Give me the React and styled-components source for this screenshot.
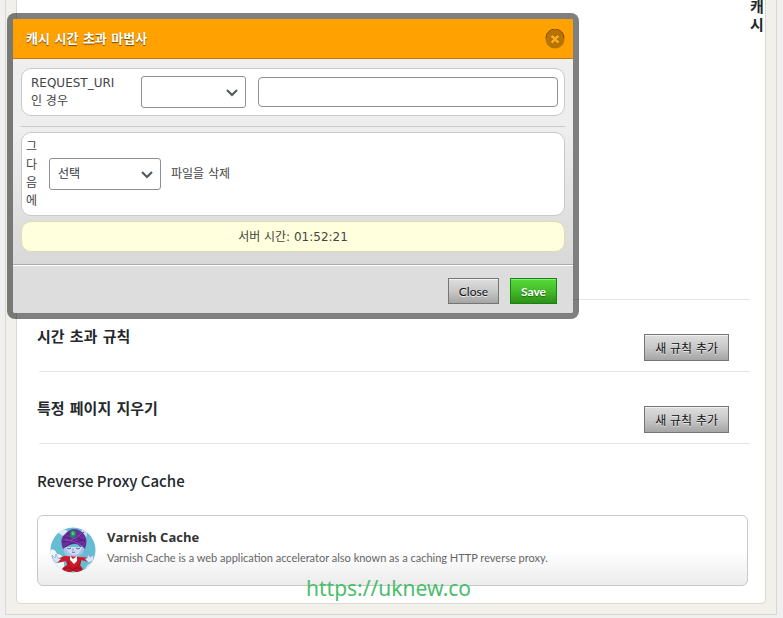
import React from 'react';
import styled, { createGlobalStyle } from 'styled-components';

const GlobalStyle = createGlobalStyle`
  * {
    box-sizing: border-box;
  }
  body {
    margin: 0;
    background: #f0f0f0;
    color: #444;
    font-family: 'DejaVu Sans', 'Noto Sans CJK KR', sans-serif;
    font-size: 12px;
    line-height: 18px;
  }
`;

const Page = styled.div`
  position: relative;
  padding: 0 6px 3px 5px;
`;

const Outer = styled.div`
  padding: 0 10px 10px;
  background: #f1f0eb;
  border: 1px solid #dad9cd;
  border-top: 0;
`;

const Panel = styled.main`
  background: white;
  border: 1px solid #dad9cd;
  border-top: 0;
  border-radius: 0 0 5px 5px;
`;

const TopArea = styled.div`
  display: flex;
  justify-content: flex-end;
  height: 299px;
`;

const SideTitle = styled.h2`
  width: 15px;
  margin: 0;
  margin-top: -2px;
  color: #23282d;
  font-size: 15px;
  line-height: 18px;
  word-break: break-all;
`;

const Content = styled.div`
  padding: 0 15px 17px 20px;
`;

const Divider = styled.hr`
  height: 1px;
  margin: 0 0 0 2px;
  border: 0;
  background: #e5e5e5;
`;

const RuleRow = styled.section`
  display: flex;
  justify-content: space-between;
  height: 71px;
  padding: 23px 21px 0 0;
`;

const RuleTitle = styled.h2`
  margin: 0;
  color: #23282d;
  font-size: 15px;
  line-height: 28px;
`;

const Button = styled.button`
  height: 27px;
  padding: 0 10px;
  margin-top: 11px;
  border: 1px solid #757575;
  background: linear-gradient(#dedede, #c8c8c8 50%, #a5a5a5);
  box-shadow: inset 0 1px 0 #f2f2f2;
  color: #111;
  font-family: inherit;
  font-size: 12px;
  text-shadow: 0 1px 0 #eee;
`;

const DialogButton = styled(Button)`
  height: 26px;
  margin-top: 0;
  font-family: Lato, sans-serif;
`;

const SaveButton = styled(DialogButton)`
  border-color: #128512;
  background: linear-gradient(#57db38, #45bb2a 50%, #2f8f18);
  box-shadow: inset 0 1px 0 #8bea75;
  color: white;
  font-weight: bold;
  text-shadow: 0 1px 1px #1d6a10;
`;

const ProxyTitle = styled.h2`
  margin: 23px 0 20px;
  color: #23282d;
  font-family: 'Noto Sans CJK KR', sans-serif;
  font-size: 15px;
  font-weight: 500;
  line-height: 28px;
`;

const ProxyCard = styled.article`
  display: flex;
  gap: 11px;
  height: 71px;
  margin-right: 2px;
  padding: 11px 12px;
  border: 1px solid #c8c8c8;
  border-radius: 6px;
  background: linear-gradient(white 50%, #ececec);
`;

const ProxyName = styled.h3`
  margin: 0;
  color: #333;
  font-family: 'Open Sans', sans-serif;
  font-size: 13px;
  line-height: 20px;
`;

const ProxyText = styled.p`
  margin: 0;
  color: #666;
  font-family: Lato, sans-serif;
  font-size: 11px;
  line-height: 22px;
`;

const Watermark = styled.div`
  position: absolute;
  left: 306px;
  bottom: 17px;
  color: #4bbd6c;
  font-family: 'Noto Sans', sans-serif;
  font-size: 21px;
  line-height: 26px;
`;

const Dialog = styled.div`
  position: absolute;
  top: 13px;
  left: 7px;
  width: 572px;
  max-width: calc(100% - 14px);
  border: 6px solid rgba(0, 0, 0, 0.5);
  border-radius: 8px;
  background: #ddd;
  background-clip: padding-box;
`;

const DialogHeader = styled.header`
  display: flex;
  align-items: center;
  justify-content: space-between;
  height: 40px;
  padding: 0 8px 0 13px;
  border-bottom: 1px solid #c37b00;
  border-radius: 2px 2px 0 0;
  background: #ffa100;
`;

const DialogTitle = styled.h1`
  margin: 0;
  color: white;
  font-size: 13px;
  text-shadow: 0 1px 1px #6b4400;
`;

const CloseIcon = styled.button`
  display: flex;
  padding: 0;
  border: 0;
  background: none;
`;

const DialogBody = styled.form`
  padding: 9px 8px 12px;
  background: linear-gradient(#eee 35%, #d8d8d8);
`;

const Box = styled.div`
  display: flex;
  align-items: center;
  border: 1px solid #c9c9c9;
  border-radius: 10px;
  background: white;
`;

const Condition = styled(Box)`
  height: 48px;
  padding: 0 6px 0 9px;
`;

const ConditionLabel = styled.label`
  width: 110px;
`;

const Line = styled.hr`
  height: 1px;
  margin: 10px 0 5px;
  border: 0;
  background: #c9c9c9;
`;

const Action = styled(Box)`
  height: 84px;
  padding: 0 4px;
`;

const ActionLabel = styled.label`
  width: 12px;
  margin-right: 11px;
  word-break: break-all;
`;

const SelectWrap = styled.div`
  display: grid;
  align-items: center;
  width: ${props => props.$width};

  > * {
    grid-area: 1 / 1;
  }
  svg {
    justify-self: end;
    margin-right: 7px;
    pointer-events: none;
  }
`;

const Select = styled.select`
  appearance: none;
  width: 100%;
  height: 32px;
  padding: 0 24px 0 8px;
  border: 1px solid #8c8f94;
  border-radius: 3px;
  background: white;
  color: #32373c;
  font-family: inherit;
  font-size: 12px;
`;

const Input = styled.input`
  flex: 1;
  min-width: 0;
  height: 30px;
  margin-left: 12px;
  padding: 0 8px;
  border: 1px solid #8c8f94;
  border-radius: 4px;
  background: white;
`;

const ActionText = styled.span`
  margin-left: 10px;
`;

const ServerTime = styled.p`
  height: 31px;
  margin: 5px 0 0;
  border: 1px solid #dcdcb0;
  border-radius: 10px;
  background: #ffffdd;
  line-height: 31px;
  text-align: center;
`;

const DialogFooter = styled.footer`
  display: flex;
  justify-content: flex-end;
  gap: 11px;
  height: 49px;
  padding: 13px 16px 0;
  border-top: 1px solid #aaa;
  border-radius: 0 0 2px 2px;
  background: #ddd;
  box-shadow: inset 0 1px 0 white;
`;

const Arrow = () => (
  <svg width='14' height='14' viewBox='0 0 14 14' fill='none'>
    <path d='M2 5l5 5 5-5' stroke='#50575e' strokeWidth='2' />
  </svg>
);

const Avatar = () => (
  <svg width='46' height='46' viewBox='0 0 46 46'>
    <defs>
      <clipPath id='avatar-clip'>
        <circle cx='23' cy='23' r='22.5' />
      </clipPath>
    </defs>
    <g clipPath='url(#avatar-clip)'>
      <rect width='46' height='46' fill='#66bdd2' />
      <path d='M0 23q5-2 7 4 5 0 6 5l3 14H0z' fill='#f1f7fa' />
      <path d='M46 35q-9-1-12 11h12z' fill='#dceff4' />
      <path d='M7 3q8-3 12 3l-2 4Q10 9 7 3z' fill='#dfe9f8' />
      <path d='M31 7q0-6 4-7 4 5 0 13z' fill='#cbdaf0' />
      <path d='M14 20q-2 9 9 10 12-1 11-10z' fill='#a9bfe8' />
      <path d='M16 20q1 7 8 8 7-1 8-8z' fill='#cbdcf7' />
      <path
        d='M13 22Q9 12 15 7q8-9 17-2 7 6 3 17l-3-3q-9-5-19 3z'
        fill='#6d2c9c'
      />
      <path
        d='M13 10q9 0 18 10M12 15q12 0 22-10M17 6q7 4 18 8M15 20q8-6 20-7'
        stroke='#43216f'
        strokeWidth='.8'
        fill='none'
      />
      <path
        d='M15 13q9 0 15 5M21 13q7-2 11-7'
        stroke='#914cb7'
        fill='none'
      />
      <ellipse cx='23' cy='7' rx='3.2' ry='4' fill='#257e6b' />
      <ellipse cx='23' cy='6.5' rx='1.5' ry='2' fill='#51ca78' />
      <path
        d='M17 21q2 2 4 0M26 21q2 2 4 0M22 25q2 1 3 0'
        stroke='#566295'
        fill='none'
      />
      <circle cx='23' cy='22.5' r='1' fill='#e77faa' />
      <path d='M14 29L5 33l2 3 9-2 2 7h12l1-8 8 2 2-4-11-1z' fill='#cf1828' />
      <path d='M20 29l3 3 4-3v5l-3 3-4-4z' fill='white' />
      <path d='M12 42q5-7 11-2 6-5 10 2-3 5-10 2-7 4-11-2z' fill='#c41526' />
      <path
        d='M14 42q5-3 9 1 4-4 8-1M18 34l1 4M31 33l-2 6'
        stroke='#7e1020'
        strokeWidth='.7'
        fill='none'
      />
      <path
        d='M2 28l3 3 1-4 2 4 3 1-4 4-4-3zM43 28l-3 2-2-3-1 4-2 1 4 4 5-3z'
        fill='#d5e4f8'
        stroke='#789bc1'
        strokeWidth='.6'
      />
    </g>
  </svg>
);

class App extends React.Component {
  state = {
    condition: '',
    uri: '',
    action: 'select'
  };

  handleChange = e => {
    this.setState({
      [e.target.name]: e.target.value
    });
  };

  handleSubmit = e => {
    e.preventDefault();
  };

  render() {
    return (
      <Page>
        <GlobalStyle />
        <Outer>
          <Panel>
            <TopArea>
              <SideTitle>캐시</SideTitle>
            </TopArea>
            <Content>
              <Divider />
              <RuleRow>
                <RuleTitle>시간 초과 규칙</RuleTitle>
                <Button type='button'>새 규칙 추가</Button>
              </RuleRow>
              <Divider />
              <RuleRow>
                <RuleTitle>특정 페이지 지우기</RuleTitle>
                <Button type='button'>새 규칙 추가</Button>
              </RuleRow>
              <Divider />
              <ProxyTitle>Reverse Proxy Cache</ProxyTitle>
              <ProxyCard>
                <Avatar />
                <div>
                  <ProxyName>Varnish Cache</ProxyName>
                  <ProxyText>
                    Varnish Cache is a web application accelerator also known as
                    a caching HTTP reverse proxy.
                  </ProxyText>
                </div>
              </ProxyCard>
            </Content>
          </Panel>
        </Outer>
        <Watermark>https://uknew.co</Watermark>

        <Dialog role='dialog' aria-labelledby='wizard-title'>
          <DialogHeader>
            <DialogTitle id='wizard-title'>캐시 시간 초과 마법사</DialogTitle>
            <CloseIcon type='button' aria-label='Close'>
              <svg width='20' height='20' viewBox='0 0 20 20'>
                <circle cx='10' cy='10' r='9.5' fill='#b87400' />
                <path
                  d='M1 9a9 9 0 0 1 18 0'
                  stroke='#754a00'
                  fill='none'
                />
                <path
                  d='M6.5 6l7 7M13.5 6l-7 7'
                  stroke='#6b4400'
                  strokeWidth='3'
                />
                <path
                  d='M6.5 6.5l7 7M13.5 6.5l-7 7'
                  stroke='#ffa820'
                  strokeWidth='2.8'
                />
              </svg>
            </CloseIcon>
          </DialogHeader>
          <DialogBody id='wizard' onSubmit={this.handleSubmit}>
            <Condition>
              <ConditionLabel htmlFor='condition'>
                REQUEST_URI
                <br />인 경우
              </ConditionLabel>
              <SelectWrap $width='105px'>
                <Select
                  id='condition'
                  name='condition'
                  value={this.state.condition}
                  onChange={this.handleChange}
                >
                  <option value='' />
                </Select>
                <Arrow />
              </SelectWrap>
              <Input
                type='text'
                name='uri'
                aria-label='REQUEST_URI'
                value={this.state.uri}
                onChange={this.handleChange}
              />
            </Condition>
            <Line />
            <Action>
              <ActionLabel htmlFor='action'>그 다음에</ActionLabel>
              <SelectWrap $width='112px'>
                <Select
                  id='action'
                  name='action'
                  value={this.state.action}
                  onChange={this.handleChange}
                >
                  <option value='select'>선택</option>
                </Select>
                <Arrow />
              </SelectWrap>
              <ActionText>파일을 삭제</ActionText>
            </Action>
            <ServerTime>서버 시간: 01:52:21</ServerTime>
          </DialogBody>
          <DialogFooter>
            <DialogButton type='button'>Close</DialogButton>
            <SaveButton type='submit' form='wizard'>
              Save
            </SaveButton>
          </DialogFooter>
        </Dialog>
      </Page>
    );
  }
}

export default App;
